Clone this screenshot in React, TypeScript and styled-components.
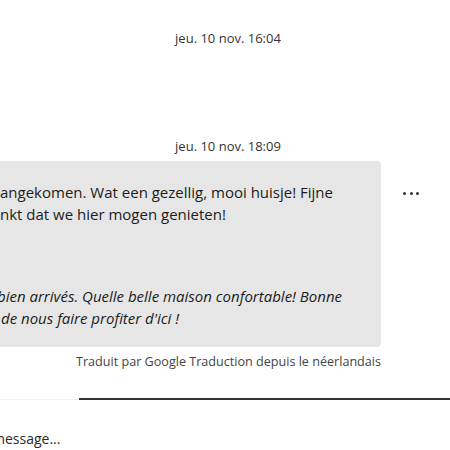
import styled, { createGlobalStyle } from "styled-components"

const GlobalStyle = createGlobalStyle`
    html, body {
        margin: 0;
        padding: 0;
        background: #ffffff;
        overflow: hidden;
    }
    body {
        font-family: "Open Sans", "Noto Sans", sans-serif;
        color: #222222;
    }
`

const Page = styled.div`
    width: 450px;
    height: 450px;
    display: flex;
    flex-direction: column;
    overflow: hidden;
`

const Thread = styled.div`
    flex: 1;
    display: flex;
    flex-direction: column;
`

const Stamp = styled.div<{ $top: number }>`
    margin-top: ${(p) => p.$top}px;
    text-align: center;
    padding-left: 6px;
    font-size: 13px;
    line-height: 16px;
    color: #333333;
`

const MessageRow = styled.div`
    margin-top: 7px;
    display: flex;
    align-items: flex-start;
    margin-left: -24px;
`

const Bubble = styled.div`
    width: 405px;
    padding: 20px 0 18px 24px;
    box-sizing: border-box;
    background: #e6e6e6;
    border-radius: 4px;
    font-size: 15px;
    line-height: 22px;
    color: #1c1c1c;
    white-space: nowrap;
`

const Original = styled.p`
    margin: 0;
`

const Translated = styled.p`
    margin: 60px 0 0;
    font-style: italic;
`

const Line = styled.span<{ $shift?: number }>`
    display: block;
    margin-left: ${(p) => p.$shift ?? 0}px;
`

const MoreButton = styled.button`
    margin: 31px 0 0 22px;
    padding: 0;
    border: 0;
    background: none;
    display: flex;
    gap: 3.5px;
    cursor: pointer;
`

const Dot = styled.span`
    width: 3px;
    height: 3px;
    border-radius: 50%;
    background: #333333;
`

const Caption = styled.div`
    margin-top: 6px;
    width: 381px;
    text-align: right;
    font-size: 12.6px;
    line-height: 18px;
    color: #444444;
`

const Composer = styled.div`
    display: flex;
    flex-direction: column;
`

const Tabs = styled.div`
    display: grid;
    grid-template-columns: 79px 1fr;
    align-items: end;
`

const TabLine = styled.div<{ $active?: boolean }>`
    height: ${(p) => (p.$active ? 2 : 1)}px;
    background: ${(p) => (p.$active ? "#333333" : "#eeeeee")};
`

const Input = styled.input`
    margin: 28px 0 0 -8px;
    padding: 0;
    border: 0;
    outline: none;
    background: none;
    font-family: "Open Sans", "Noto Sans", sans-serif;
    font-size: 14px;
    line-height: 22px;
    height: 22px;
    &::placeholder {
        color: #2a2a2a;
    }
`

export default function App() {
    return (
        <Page>
            <GlobalStyle />
            <Thread>
                <Stamp $top={30}>jeu. 10 nov. 16:04</Stamp>
                <Stamp $top={92}>jeu. 10 nov. 18:09</Stamp>
                <MessageRow>
                    <Bubble>
                        <Original>
                            <Line>angekomen. Wat een gezellig, mooi huisje! Fijne</Line>
                            <Line>nkt dat we hier mogen genieten!</Line>
                        </Original>
                        <Translated>
                            <Line $shift={-3}>bien arrivés. Quelle belle maison confortable! Bonne</Line>
                            <Line $shift={1}>de nous faire profiter d'ici !</Line>
                        </Translated>
                    </Bubble>
                    <MoreButton aria-label="Plus d'options">
                        <Dot />
                        <Dot />
                        <Dot />
                    </MoreButton>
                </MessageRow>
                <Caption>Traduit par Google Traduction depuis le néerlandais</Caption>
            </Thread>
            <Composer>
                <Tabs>
                    <TabLine />
                    <TabLine $active />
                </Tabs>
                <Input placeholder="message..." />
            </Composer>
        </Page>
    )
}
